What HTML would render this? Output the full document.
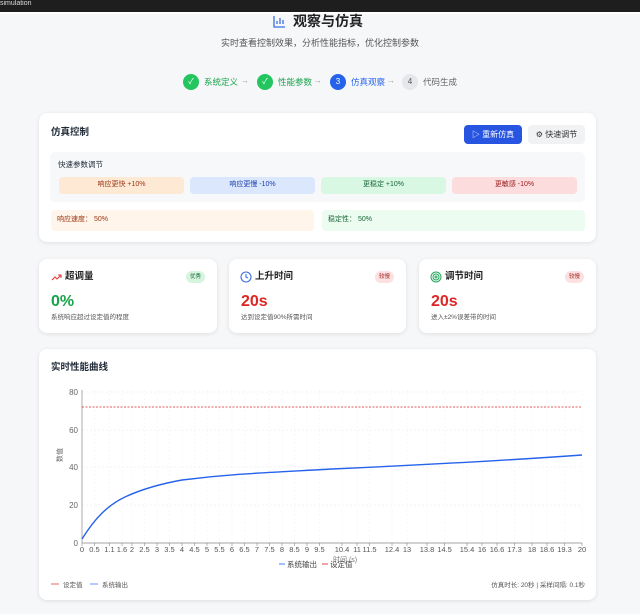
<!DOCTYPE html>
<html><head><meta charset="utf-8"><style>
*{box-sizing:border-box;margin:0;padding:0;line-height:1.2}
body{width:640px;height:614px;overflow:hidden;background:#f6f7f9;font-family:"Liberation Sans","Noto Sans CJK SC",sans-serif;color:#1f2937;position:relative}
.abs{position:absolute}
.card{position:absolute;background:#fff;border-radius:8px;box-shadow:0 1px 4px rgba(0,0,0,.1)}
.step{position:absolute;top:74px;height:16px;display:flex;align-items:center;font-size:8.5px}
.dot{width:16px;height:16px;border-radius:50%;display:flex;align-items:center;justify-content:center;color:#fff;font-size:8px;margin-right:5px}
.btn{position:absolute;height:19px;border-radius:4px;font-size:8px;display:flex;align-items:center;justify-content:center}
.q{position:absolute;top:177px;width:125px;height:17px;border-radius:4px;font-size:7px;display:flex;align-items:center;justify-content:center}
.mt{position:absolute;font-size:9.5px;font-weight:bold;top:12px;left:26px;color:#222}
.badge{position:absolute;top:12px;right:12px;width:19px;height:12px;border-radius:6px;font-size:5.5px;display:flex;align-items:center;justify-content:center}
.val{position:absolute;left:12px;top:33px;font-size:16px;font-weight:bold}
.desc{position:absolute;left:12px;top:55px;font-size:6.5px;color:#555}
</style></head><body>
<div class="abs" style="left:0;top:0;width:640px;height:12px;background:#1e1e1e"></div>
<div class="abs" style="left:0;top:0;font-size:7px;color:#ddd;line-height:8px">simulation</div>
<div class="abs" style="left:0;top:12px;width:640px;height:2px;background:#fff"></div>
<svg class="abs" style="left:273px;top:15px" width="13" height="13" viewBox="0 0 13 13"><path d="M1 1v11h11M4 9V6M7 9V3M10 9V5" stroke="#3b6fe0" stroke-width="1.3" fill="none"/></svg>
<div class="abs" style="left:293px;top:13px;font-size:14px;font-weight:bold;color:#222">观察与仿真</div>
<div class="abs" style="left:0;width:640px;text-align:center;top:38px;font-size:9px;color:#555">实时查看控制效果，分析性能指标，优化控制参数</div>
<div class="step" style="left:183px;color:#16a34a"><div class="dot" style="background:#22c55e">✓</div>系统定义</div>
<div class="abs" style="left:241px;top:76px;font-size:8px;color:#999">→</div>
<div class="step" style="left:257px;color:#16a34a"><div class="dot" style="background:#22c55e">✓</div>性能参数</div>
<div class="abs" style="left:314px;top:76px;font-size:8px;color:#999">→</div>
<div class="step" style="left:330px;color:#2563eb"><div class="dot" style="background:#2563eb">3</div>仿真观察</div>
<div class="abs" style="left:387px;top:76px;font-size:8px;color:#999">→</div>
<div class="step" style="left:402px;color:#666"><div class="dot" style="background:#e5e7eb;color:#555">4</div>代码生成</div>

<div class="card" style="left:39px;top:113px;width:557px;height:129px">
<div class="abs" style="left:12px;top:14px;font-size:9.5px;font-weight:bold">仿真控制</div>
<div class="btn" style="left:425px;top:12px;width:58px;background:#2754e0;color:#fff">▷ 重新仿真</div>
<div class="btn" style="left:489px;top:12px;width:57px;background:#f1f2f4;color:#333">⚙ 快速调节</div>
<div class="abs" style="left:11px;top:39px;width:535px;height:50px;background:#f7f8fa;border-radius:5px"></div>
<div class="abs" style="left:19px;top:47px;font-size:7.5px">快速参数调节</div>
</div>
<div class="q" style="left:59px;background:#fde9d4;color:#9a3412">响应更快 +10%</div>
<div class="q" style="left:190px;background:#dbe7fc;color:#1e40af">响应更慢 -10%</div>
<div class="q" style="left:321px;background:#d9f8e4;color:#166534">更稳定 +10%</div>
<div class="q" style="left:452px;background:#fcdcdc;color:#991b1b">更敏感 -10%</div>
<div class="abs" style="left:51px;top:210px;width:263px;height:21px;background:#fff5ea;border-radius:4px;font-size:7px;color:#9a3412;padding:6px 6px">响应速度： 50%</div>
<div class="abs" style="left:322px;top:210px;width:263px;height:21px;background:#ecfcf1;border-radius:4px;font-size:7px;color:#166534;padding:6px 6px">稳定性： 50%</div>

<div class="card" style="left:39px;top:259px;width:178px;height:74px">
<svg class="abs" style="left:12px;top:13px" width="11" height="10" viewBox="0 0 11 10"><path d="M1 8l3-3 2 2 4-4M7 3h3v3" stroke="#e23b3b" stroke-width="1.1" fill="none"/></svg>
<div class="mt">超调量</div><div class="badge" style="background:#d6f5df;color:#166534">优秀</div>
<div class="val" style="color:#16a34a">0%</div><div class="desc">系统响应超过设定值的程度</div></div>
<div class="card" style="left:229px;top:259px;width:177px;height:74px">
<svg class="abs" style="left:11px;top:12px" width="12" height="12" viewBox="0 0 12 12"><circle cx="6" cy="6" r="5" stroke="#3b6fe0" stroke-width="1.1" fill="none"/><path d="M6 3v3l2 1" stroke="#3b6fe0" stroke-width="1.1" fill="none"/></svg>
<div class="mt">上升时间</div><div class="badge" style="background:#fde0e0;color:#991b1b">较慢</div>
<div class="val" style="color:#dc2626">20s</div><div class="desc">达到设定值90%所需时间</div></div>
<div class="card" style="left:419px;top:259px;width:177px;height:74px">
<svg class="abs" style="left:11px;top:12px" width="12" height="12" viewBox="0 0 12 12"><g stroke="#22a55a" stroke-width="1" fill="none"><circle cx="6" cy="6" r="5"/><circle cx="6" cy="6" r="3"/><circle cx="6" cy="6" r="1"/></g></svg>
<div class="mt">调节时间</div><div class="badge" style="background:#fde0e0;color:#991b1b">较慢</div>
<div class="val" style="color:#dc2626">20s</div><div class="desc">进入±2%误差带的时间</div></div>

<div class="card" style="left:39px;top:349px;width:557px;height:251px">
<div class="abs" style="left:12px;top:13px;font-size:9.5px;font-weight:bold">实时性能曲线</div></div>
<svg class="abs" style="left:0;top:0" width="640" height="614" font-family="Liberation Sans,Noto Sans CJK SC,sans-serif">
<g stroke="#e5e7eb" stroke-width="0.5" stroke-dasharray="2,2">
<line x1="82" y1="392" x2="582" y2="392"/><line x1="82" y1="430" x2="582" y2="430"/><line x1="82" y1="467" x2="582" y2="467"/><line x1="82" y1="505" x2="582" y2="505"/>
</g>
<g id="vg" stroke="#eef0f2" stroke-width="0.5" stroke-dasharray="2,2"></g>
<line x1="82" y1="390" x2="82" y2="543" stroke="#888" stroke-width="0.7"/>
<line x1="82" y1="543" x2="582" y2="543" stroke="#888" stroke-width="0.7"/>
<g font-size="8" fill="#666" text-anchor="end"><text x="78" y="395">80</text><text x="78" y="433">60</text><text x="78" y="470">40</text><text x="78" y="508">20</text><text x="78" y="546">0</text></g>
<text x="58" y="466" font-size="7" fill="#666" transform="rotate(-90 58 462)">数值</text>
<line x1="82" y1="407" x2="582" y2="407" stroke="#dc2626" stroke-width="0.8" stroke-dasharray="2,1.5"/>
<path fill="none" stroke="#2563eb" stroke-width="1.4" d="M82,539 C95,518 108,505 125,497 C142,489 160,484 182,480 C230,474 260,473 332,469 C420,465 500,461 582,455"/>
<g id="xt" font-size="7.5" fill="#555" text-anchor="middle"></g>
<text x="333" y="562" font-size="7" fill="#777">时间 (s)</text>
<line x1="279" y1="564" x2="285" y2="564" stroke="#3b82f6"/><text x="287" y="567" font-size="7.5" fill="#444">系统输出</text>
<line x1="322" y1="564" x2="328" y2="564" stroke="#ef4444"/><text x="330" y="567" font-size="7.5" fill="#444">设定值</text>
<line x1="51" y1="584" x2="59" y2="584" stroke="#f08080" stroke-width="1.2"/><text x="63" y="587" font-size="6.5" fill="#555">设定值</text>
<line x1="90" y1="584" x2="98" y2="584" stroke="#7ba7f7" stroke-width="1.2"/><text x="102" y="587" font-size="6.5" fill="#555">系统输出</text>
<text x="585" y="587" font-size="6.5" fill="#555" text-anchor="end">仿真时长: 20秒 | 采样间隔: 0.1秒</text>
</svg>
<script>
var L=[0,0.5,1.1,1.6,2,2.5,3,3.5,4,4.5,5,5.5,6,6.5,7,7.5,8,8.5,9,9.5,10.4,11,11.5,12.4,13,13.8,14.5,15.4,16,16.6,17.3,18,18.6,19.3,20];
var g=document.getElementById('xt'),v=document.getElementById('vg'),ns='http://www.w3.org/2000/svg';
L.forEach(function(t){var x=82+t*25;var e=document.createElementNS(ns,'text');e.setAttribute('x',x);e.setAttribute('y',552);e.textContent=t;g.appendChild(e);
var l=document.createElementNS(ns,'line');l.setAttribute('x1',x);l.setAttribute('x2',x);l.setAttribute('y1',390);l.setAttribute('y2',543);v.appendChild(l);
var k=document.createElementNS(ns,'line');k.setAttribute('x1',x);k.setAttribute('x2',x);k.setAttribute('y1',543);k.setAttribute('y2',546);k.setAttribute('stroke','#888');k.setAttribute('stroke-width','0.6');g.parentNode.appendChild(k);});
</script>
</body></html>
